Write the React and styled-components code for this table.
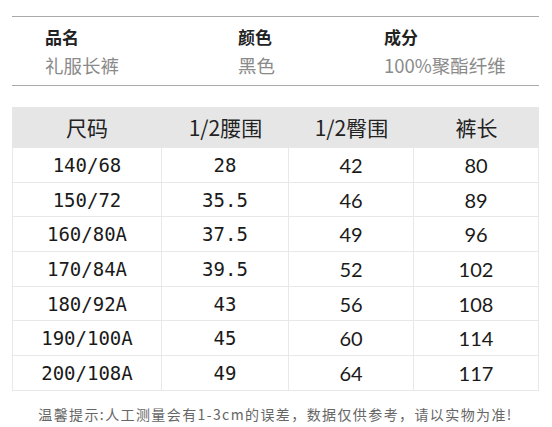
import React from 'react';
import styled, { createGlobalStyle } from 'styled-components';

const GlobalStyle = createGlobalStyle`
    body{
        margin: 0;
        background: #fff;
        font-family: "Noto Sans CJK SC", "Noto Sans", sans-serif;
    }
`

const info = [
    { label: "品名", value: "礼服长裤" },
    { label: "颜色", value: "黑色" },
    { label: "成分", value: "100%聚酯纤维" },
];

const heads = ["尺码", "1/2腰围", "1/2臀围", "裤长"];

const rows = [
    ["140/68", "28", "42", "80"],
    ["150/72", "35.5", "46", "89"],
    ["160/80A", "37.5", "49", "96"],
    ["170/84A", "39.5", "52", "102"],
    ["180/92A", "43", "56", "108"],
    ["190/100A", "45", "60", "114"],
    ["200/108A", "49", "64", "117"],
];

const App = () => {
    return (
        <Page>
            <GlobalStyle/>
            <InfoBox>
                {info.map((item) => (
                    <InfoCol key={item.label}>
                        <Label>{item.label}</Label>
                        <Value>{item.value}</Value>
                    </InfoCol>
                ))}
            </InfoBox>

            <SizeTable>
                {heads.map((h) => (
                    <HeadCell key={h}>{h}</HeadCell>
                ))}
                {rows.map((row, idx) => row.map((cell, i) => (
                    <Cell key={idx + "-" + i} $mono={i < 2} $first={i === 0}>
                        {cell}
                    </Cell>
                )))}
            </SizeTable>

            <Tip>温馨提示:人工测量会有1-3cm的误差，数据仅供参考，请以实物为准!</Tip>
        </Page>
    );
};

const Page = styled.div`
    width: 527px;
    padding: 16px 0 0 12px;
`

const InfoBox = styled.div`
    display: grid;
    grid-template-columns: 193px 146px 1fr;
    padding: 8px 0 8px 33px;
    border-top: 1px solid #aaa;
    border-bottom: 1px solid #aaa;
`

const InfoCol = styled.div`
    display: flex;
    flex-direction: column;
    gap: 4px;
`

const Label = styled.span`
    font-size: 17px;
    line-height: 24px;
    font-weight: 700;
    color: #222;
`

const Value = styled.span`
    font-size: 18.5px;
    line-height: 24px;
    color: #8a8a8a;
`

const SizeTable = styled.div`
    margin-top: 21px;
    display: grid;
    grid-template-columns: 150px 127px 125px 125px;
    grid-template-rows: 40px;
    grid-auto-rows: 34.7px;
    border-bottom: 1px solid #e8e8e8;
`

const HeadCell = styled.div`
    background: #e6e6e6;
    display: flex;
    align-items: center;
    justify-content: center;
    font-size: 21px;
    color: #222;
`

const Cell = styled.div`
    display: flex;
    align-items: center;
    justify-content: center;
    border-top: 1px solid #e8e8e8;
    border-right: 1px solid #e8e8e8;
    border-left: ${(p) => (p.$first ? "1px solid #e8e8e8" : "none")};
    font-family: ${(p) => (p.$mono ? '"DejaVu Sans Mono", monospace' : 'Lato, "Noto Sans", sans-serif')};
    font-size: ${(p) => (p.$mono ? "19px" : "20px")};
    color: #1a1a1a;
`

const Tip = styled.div`
    margin-top: 13px;
    text-align: center;
    font-size: 14px;
    line-height: 20px;
    letter-spacing: 1.4px;
    color: #666;
`

export default App;
